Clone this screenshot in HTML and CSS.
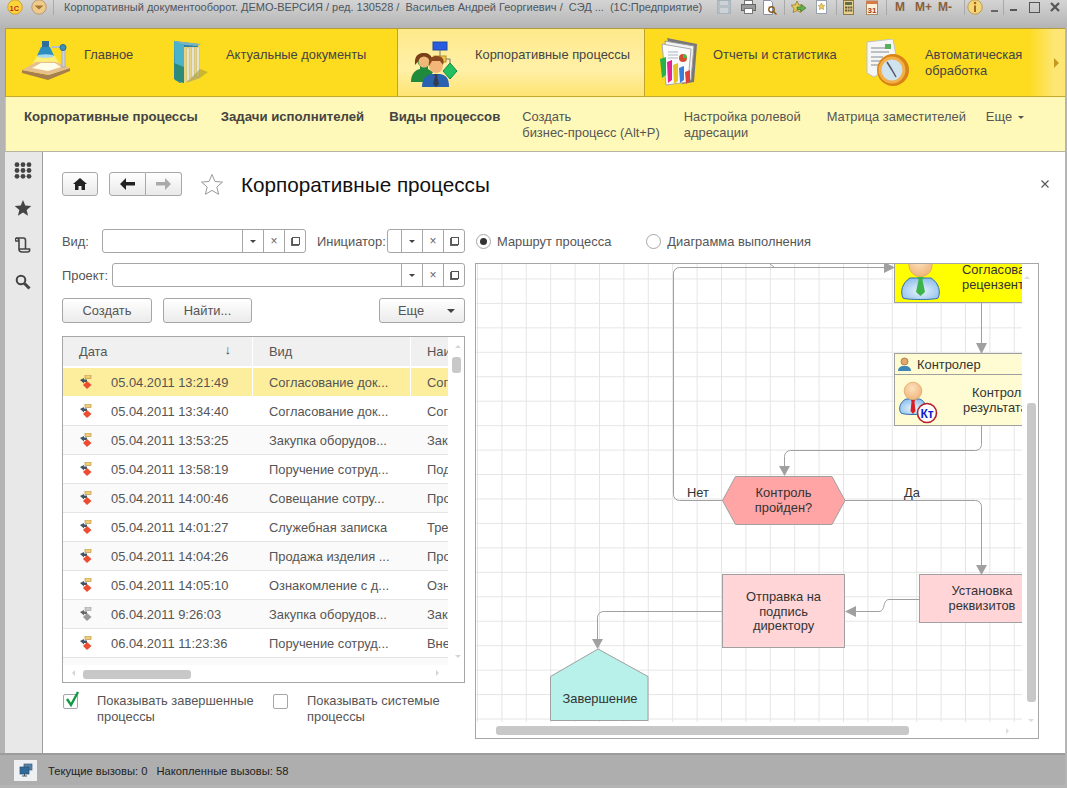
FILE: index.html
```html
<!DOCTYPE html>
<html lang="ru">
<head>
<meta charset="utf-8">
<title>Корпоративные процессы</title>
<link rel="stylesheet" href="styles.css">
</head>
<body>
<div class="window">
  <header class="titlebar">
    <svg class="tb-logo" width="16" height="16" viewBox="0 0 16 16"><circle cx="8" cy="8" r="7.200" fill="#fbd53a" stroke="#d0a030"/><text x="2.500" y="11.500" class="logo-text">1С</text></svg>
    <svg class="tb-menu" width="16" height="16" viewBox="0 0 16 16"><circle cx="8" cy="8" r="7.200" fill="#eecb8c" stroke="#b9986a"/><path d="M3.500 6.500h9L8 10.500z" fill="#a5752c"/></svg>
    <span class="tb-sep s0"></span>
    <span class="tb-title">Корпоративный документооборот. ДЕМО-ВЕРСИЯ / ред. 130528 /&nbsp; Васильев Андрей Георгиевич /&nbsp; СЭД ...&nbsp; (1С:Предприятие)</span>
    <div class="tb-tools">
      <svg width="14" height="14" viewBox="0 0 14 14"><rect x=".5" y=".5" width="13" height="13" fill="#b4bfc6" stroke="#a7b3bb"/><rect x="3" y="1" width="8" height="4" fill="#ccd2d6"/><rect x="3" y="8" width="8" height="5" fill="#ccd2d6"/></svg>
      <svg class="i-print" width="15" height="14" viewBox="0 0 15 14"><rect x="3.500" y=".5" width="8" height="4" fill="#fff" stroke="#777"/><rect x=".5" y="4.500" width="14" height="6" fill="#9a9a9a" stroke="#666"/><rect x="3.500" y="8.500" width="8" height="5" fill="#fff" stroke="#777"/></svg>
      <svg class="i-prev" width="15" height="15" viewBox="0 0 15 15"><path d="M1.500.5h7l2 2v12h-9z" fill="#fff" stroke="#8793a3"/><circle cx="9.500" cy="9.500" r="2.700" fill="none" stroke="#8a5a1c" stroke-width="1.400"/><path d="M11.500 11.500l3 3" stroke="#8a5a1c" stroke-width="1.500"/></svg>
      <span class="tb-sep s1"></span>
      <svg class="i-fav" width="15" height="15" viewBox="0 0 15 15"><path d="M6 1l1.700 3.900 4.300.4-3 3 .9 4.200L6 10.500 2.100 12.500l.9-4.200-3-3 4.300-.4z" fill="#e8c95a" stroke="#a38a3c"/><path d="M6 7h4V4.500L15 8l-5 3.800V9.500H6z" fill="#5fb04a" stroke="#3f7e34" stroke-width=".7"/></svg>
      <svg class="i-star" width="11" height="14" viewBox="0 0 11 14"><rect x=".5" y=".5" width="10" height="13" fill="#fff" stroke="#98a2ad"/><path d="M5.500 3l1 2.200 2.300.3-1.700 1.600.5 2.400-2.100-1.200-2.100 1.200.5-2.400-1.700-1.600 2.300-.3z" fill="#f2cd5c" stroke="#a98b2f" stroke-width=".6"/></svg>
      <span class="tb-sep s2"></span>
      <svg class="i-calc" width="11" height="15" viewBox="0 0 11 15"><rect x=".5" y=".5" width="10" height="14" fill="#e8d08a" stroke="#8a7a4a"/><rect x="2" y="2" width="7" height="3" fill="#5f6d4f"/><path d="M2 6.500h2v2H2zm2.600 0h2v2h-2zm2.600 0h2v2h-2zM2 9.500h2v2H2zm2.600 0h2v2h-2zm2.600 0h2v2h-2z" fill="#665d3f"/></svg>
      <svg class="i-cal" width="12" height="15" viewBox="0 0 12 15"><rect x=".5" y="1" width="11" height="13.500" fill="#fbf0d8" stroke="#a58b66"/><rect x=".5" y="1" width="11" height="3" fill="#d9794a"/><text x="1.500" y="12.500" class="cal-text">31</text></svg>
      <span class="tb-sep s3"></span>
      <span class="tb-m m1">M</span><span class="tb-m m2">M+</span><span class="tb-m m3">M-</span>
      <span class="tb-sep s4"></span>
      <svg class="i-info" width="16" height="16" viewBox="0 0 16 16"><circle cx="8" cy="8" r="7.200" fill="#f4d676" stroke="#c09a4f"/><rect x="7" y="6.500" width="2" height="6.500" fill="#a8651d"/><circle cx="8" cy="4" r="1.300" fill="#a8651d"/></svg>
      <span class="tb-drop"></span>
      <span class="tb-sep s5"></span>
      <span class="tb-min"></span>
      <span class="tb-max"></span>
      <svg class="tb-close" width="10" height="10" viewBox="0 0 10 10"><path d="M1 1l8 8M9 1L1 9" stroke="#555" stroke-width="2.200"/></svg>
    </div>
  </header>

  <nav class="sections">
    <a class="section s-main">
      <svg class="sec-icon" width="48" height="39" viewBox="0 0 48 39"><path d="M15 15h18l7 12-18 3-14-3z" fill="#fdf08a" opacity=".85"/><path d="M0 29v3l26 7 22-9v-3L26 34z" fill="#a57f4e"/><path d="M0 29l14-8h20l14 6-21 7z" fill="#e6c08c"/><path d="M10 27l9-5h14l6 4-13 4z" fill="#fffce8"/><rect x="40" y="7" width="3" height="19" fill="#ced3d6" stroke="#8c9298" stroke-width=".5"/><path d="M30 6h10" stroke="#b9c0c4" stroke-width="2"/><path d="M15 15l4-9h9l4 9z" fill="#2a8fc0"/><rect x="20" y="0" width="7" height="6" fill="#2f6f96"/><ellipse cx="23.500" cy="15" rx="8.500" ry="1.800" fill="#a7d9ef"/><circle cx="41" cy="6.500" r="3" fill="#3f8fbb" stroke="#25688e"/></svg>
      <span class="sec-text w-main">Главное</span>
    </a>
    <a class="section s-docs">
      <svg class="sec-icon" width="40" height="46" viewBox="0 0 40 46"><path d="M2 2l24 3v30l-18 9-6-4z" fill="#2f7fa3"/><path d="M3 2l26 3-4 2L3 5z" fill="#79b4c4"/><path d="M12 8h15v32l-15 4z" fill="#e8d47a"/><path d="M15 9h2v33h-2zm5-1h2v31h-2zm5 0h2v30h-2z" fill="#f7f6ee" stroke="#9a9a8a" stroke-width=".4"/><path d="M28 30l8 3-8 6-14 5z" fill="#a79b3a" opacity=".6"/><path d="M2 2l10 4v38l-9-3z" fill="#4cb2c9"/><path d="M2 24l10 4v16l-9-3z" fill="#2d8a78"/></svg>
      <span class="sec-text w-docs">Актуальные документы</span>
    </a>
    <a class="section s-proc">
      <svg class="sec-icon" width="48" height="46" viewBox="0 0 48 46"><rect x="23" y="1" width="14" height="8" fill="#2a5ce0" stroke="#2247a8"/><path d="M30 9v6" stroke="#777"/><rect x="24" y="15" width="12" height="6" fill="#f1c64a" stroke="#b48f22"/><path d="M30 21v4M36 18h4v4" stroke="#777" fill="none"/><path d="M40 22l7 8-7 8-7-8z" fill="#22c060" stroke="#138a42"/><path d="M1 41c0-8 4-12 9-13v-3c-4-3-4-13 4-13s8 10 4 13v3l5 3-6 10z" fill="#1f8a3c"/><path d="M5 24c-1-10 4-12 9-12s10 3 8 12l-3-6-8-1z" fill="#7a3f18"/><circle cx="14" cy="21" r="5.500" fill="#f0b878"/><path d="M12 46c0-9 4-12 10-13h8c6 1 9 4 9 13z" fill="#2a62b0"/><circle cx="26" cy="25" r="7" fill="#f3b678"/><path d="M19 25c-1-8 3-10 8-10s8 3 6 9l-3-4h-8z" fill="#8b4a1e"/><path d="M24 33h4l-1 2 2 8-3 3-3-3 2-8z" fill="#363c50"/></svg>
      <span class="sec-text w-proc">Корпоративные процессы</span>
    </a>
    <a class="section s-rep">
      <svg class="sec-icon" width="40" height="50" viewBox="0 0 40 50"><path d="M8 1l30 6-3 38-12 2z" fill="#777"/><path d="M6 4l29 5-3 34-24 3z" fill="#f2f2f2" stroke="#999"/><path d="M3 7l29 5-3 33-22 3z" fill="#fbfbfb" stroke="#aaa"/><circle cx="24" cy="21" r="4" fill="#d14f2e"/><path d="M24 21v-4a4 4 0 0 1 4 4z" fill="#4bb94a"/><path d="M9 15h10M9 18h10M9 21h10" stroke="#a9b3c6"/><path d="M1 22l6-2v18l-4 3z" fill="#27b14a"/><path d="M8 25l5-2v20l-4 3z" fill="#e02690"/><path d="M14 28l5-2v18l-4 3z" fill="#e8c225"/><path d="M20 31l5-2v14l-4 3z" fill="#3a7ed8"/><path d="M26 35l5-2v11l-4 3z" fill="#e0413a"/></svg>
      <span class="sec-text w-rep">Отчеты и статистика</span>
    </a>
    <a class="section s-auto">
      <svg class="sec-icon" width="44" height="48" viewBox="0 0 44 48"><path d="M1 3l26-3 4 22L8 38 1 34z" fill="#f6f6f6" stroke="#bcc4c6"/><path d="M5 9h14M5 13h18M5 18h12M5 22h12M5 26h10" stroke="#7f8d92"/><rect x="19" y="5" width="6" height="5" fill="#58b158"/><circle cx="27" cy="31" r="16" fill="#d88314"/><circle cx="26" cy="31" r="13.500" fill="#f3b04a"/><circle cx="26" cy="31" r="10.500" fill="#cfe3ee"/><path d="M26 31l-5-8M26 31l4 7" stroke="#556" stroke-width="1.500"/></svg>
      <span class="sec-text w-auto">Автоматическая<br>обработка</span>
    </a>
    <span class="sec-more"></span>
  </nav>

  <nav class="commands">
    <a class="cmd b c1">Корпоративные процессы</a>
    <a class="cmd b c2">Задачи исполнителей</a>
    <a class="cmd b c3">Виды процессов</a>
    <a class="cmd c4">Создать<br>бизнес-процесс (Alt+P)</a>
    <a class="cmd c5">Настройка ролевой<br>адресации</a>
    <a class="cmd c6">Матрица заместителей</a>
    <a class="cmd c7">Еще <span class="cmd-drop"></span></a>
  </nav>

  <div class="workspace">
    <aside class="sidebar">
      <svg width="18" height="17" viewBox="0 0 18 17" fill="#444"><circle cx="3" cy="2.700" r="2.400"/><circle cx="9" cy="2.700" r="2.400"/><circle cx="15" cy="2.700" r="2.400"/><circle cx="3" cy="8.500" r="2.400"/><circle cx="9" cy="8.500" r="2.400"/><circle cx="15" cy="8.500" r="2.400"/><circle cx="3" cy="14.300" r="2.400"/><circle cx="9" cy="14.300" r="2.400"/><circle cx="15" cy="14.300" r="2.400"/></svg>
      <svg width="18" height="16" viewBox="0 0 18 17"><path d="M9 0l2.400 5.900 6.400.5-4.900 4.100 1.500 6.200L9 13.400 3.600 16.700l1.500-6.200L.2 6.400l6.400-.5z" fill="#444"/></svg>
      <svg width="16" height="16" viewBox="0 0 16 16"><path d="M1 1h7.500c1.500 0 2 1 2 2.500V12h-6.500V3.500C4 2 3 1 1 1zM1 1C0 2 0 4 1.500 4H4M4 12c0 2 1 3 3 3h5.500c1.500 0 2.500-1 2-3h-4" fill="none" stroke="#444" stroke-width="1.600"/></svg>
      <svg width="16" height="16" viewBox="0 0 16 16"><circle cx="6" cy="6" r="4.300" fill="none" stroke="#444" stroke-width="2"/><path d="M9.500 9.500l5 5" stroke="#444" stroke-width="3"/></svg>
    </aside>

    <main class="form">
      <div class="form-head">
        <button class="btn-icon home"><svg width="14" height="12" viewBox="0 0 14 12"><path d="M7 0l7 6h-2v6H8.500V8h-3v4H2V6H0z" fill="#222"/></svg></button>
        <div class="btn-pair">
          <button class="btn-icon half"><svg width="15" height="12" viewBox="0 0 15 12"><path d="M6 0v4h9v3.500H6V12L0 6z" fill="#222"/></svg></button>
          <button class="btn-icon half"><svg width="15" height="12" viewBox="0 0 15 12"><path d="M9 0v4H0v3.500h9V12l6-6z" fill="#aaa"/></svg></button>
        </div>
        <svg class="fav" width="24" height="22" viewBox="0 0 24 22"><path d="M12 1.500l3 7 7.500.6-5.700 4.900 1.800 7.300L12 17.400l-6.600 3.900 1.800-7.300L1.500 9.100 9 8.500z" fill="#fff" stroke="#999"/></svg>
        <h1 class="form-title">Корпоративные процессы</h1>
        <svg class="form-close" width="8" height="8" viewBox="0 0 8 8"><path d="M.5.5l7 7M7.500.5l-7 7" stroke="#555" stroke-width="1.100"/></svg>
      </div>

      <div class="form-body">
        <section class="left">
          <div class="field-row r1">
            <label class="lbl vid">Вид:</label>
            <div class="field f-vid"><span class="fld-input"></span><span class="fb"><i class="tri"></i></span><span class="fb x">×</span><span class="fb"><i class="copy"></i></span></div>
            <label class="lbl ini">Инициатор:</label>
            <div class="field f-ini"><span class="fld-input"></span><span class="fb"><i class="tri"></i></span><span class="fb x">×</span><span class="fb"><i class="copy"></i></span></div>
          </div>
          <div class="field-row r2">
            <label class="lbl prj">Проект:</label>
            <div class="field f-prj"><span class="fld-input"></span><span class="fb"><i class="tri"></i></span><span class="fb x">×</span><span class="fb"><i class="copy"></i></span></div>
          </div>
          <div class="actions">
            <button class="btn b-new">Создать</button>
            <button class="btn b-find">Найти...</button>
            <button class="btn b-more">Еще <i class="tri big"></i></button>
          </div>

          <div class="table">
            <div class="t-view">
              <div class="t-row t-head"><div class="c-date">Дата<span class="sort">↓</span></div><div class="c-kind">Вид</div><div class="c-name">Наи</div></div>
              <div class="t-row sel"><div class="c-date"><svg class="ri"><use href="#rowicon"/></svg>05.04.2011 13:21:49</div><div class="c-kind">Согласование док...</div><div class="c-name">Сог</div></div>
              <div class="t-row"><div class="c-date"><svg class="ri"><use href="#rowicon"/></svg>05.04.2011 13:34:40</div><div class="c-kind">Согласование док...</div><div class="c-name">Сог</div></div>
              <div class="t-row alt"><div class="c-date"><svg class="ri"><use href="#rowicon"/></svg>05.04.2011 13:53:25</div><div class="c-kind">Закупка оборудов...</div><div class="c-name">Зак</div></div>
              <div class="t-row"><div class="c-date"><svg class="ri"><use href="#rowicon"/></svg>05.04.2011 13:58:19</div><div class="c-kind">Поручение сотруд...</div><div class="c-name">Под</div></div>
              <div class="t-row alt"><div class="c-date"><svg class="ri"><use href="#rowicon"/></svg>05.04.2011 14:00:46</div><div class="c-kind">Совещание сотру...</div><div class="c-name">Про</div></div>
              <div class="t-row"><div class="c-date"><svg class="ri"><use href="#rowicon"/></svg>05.04.2011 14:01:27</div><div class="c-kind">Служебная записка</div><div class="c-name">Тре</div></div>
              <div class="t-row alt"><div class="c-date"><svg class="ri"><use href="#rowicon"/></svg>05.04.2011 14:04:26</div><div class="c-kind">Продажа изделия ...</div><div class="c-name">Про</div></div>
              <div class="t-row"><div class="c-date"><svg class="ri"><use href="#rowicon"/></svg>05.04.2011 14:05:10</div><div class="c-kind">Ознакомление с д...</div><div class="c-name">Озн</div></div>
              <div class="t-row alt"><div class="c-date"><svg class="ri"><use href="#rowicongrey"/></svg>06.04.2011 9:26:03</div><div class="c-kind">Закупка оборудов...</div><div class="c-name">Зак</div></div>
              <div class="t-row"><div class="c-date"><svg class="ri"><use href="#rowicon"/></svg>06.04.2011 11:23:36</div><div class="c-kind">Поручение сотруд...</div><div class="c-name">Вне</div></div>
              <div class="t-row alt"><div class="c-date"><svg class="ri"><use href="#rowicon"/></svg></div><div class="c-kind"></div><div class="c-name"></div></div>
            </div>
            <span class="sb-v-up"></span><span class="sb-v-thumb"></span><span class="sb-v-down"></span>
            <span class="sb-h-left"></span><span class="sb-h-thumb"></span><span class="sb-h-right"></span>
          </div>

          <div class="checks">
            <div class="check c-a">
              <span class="box"><svg width="20" height="20" viewBox="0 0 20 20"><path d="M4 8l4 6L15 1" fill="none" stroke="#129a42" stroke-width="2.400"/></svg></span>
              <span class="check-text">Показывать завершенные процессы</span>
            </div>
            <div class="check c-b">
              <span class="box"></span>
              <span class="check-text">Показывать системые процессы</span>
            </div>
          </div>
        </section>

        <section class="right">
          <div class="radios">
            <span class="radio on r-a"><i></i>Маршрут процесса</span>
            <span class="radio r-b"><i></i>Диаграмма выполнения</span>
          </div>
          <div class="canvas">
            <svg class="diagram" width="546" height="458" viewBox="476 264 546 458">
              <defs>
                <pattern id="grid" x="477" y="254" width="24.400" height="24.450" patternUnits="userSpaceOnUse"><path d="M.5 0V24.450M0 .5H24.400" fill="none" stroke="#e5e5e5"/></pattern>
                <radialGradient id="shirt" cx=".5" cy=".6" r=".6"><stop offset="0" stop-color="#eaf5fd"/><stop offset="1" stop-color="#8fc0ec"/></radialGradient>
                <radialGradient id="head" cx=".45" cy=".35" r=".7"><stop offset="0" stop-color="#fde2bd"/><stop offset="1" stop-color="#eeb277"/></radialGradient>
              </defs>
              <rect x="476" y="264" width="546" height="458" fill="#fff"/>
              <rect x="476" y="264" width="546" height="458" fill="url(#grid)"/>

              <g class="link">
                <path d="M722.500 500.500H679.500a6 6 0 0 1-6-6V273.500a6 6 0 0 1 6-6H884"/>
                <path d="M981.500 303V343"/>
                <path d="M981.500 426V444.500a6 6 0 0 1-6 6H790.500a6 6 0 0 0-6 6V466"/>
                <path d="M845 500.500H975.500a6 6 0 0 1 6 6V565"/>
                <path d="M919.500 599.500H889c-7 0-3 12-10 12H856"/>
                <path d="M722.500 611.500H603.500a6 6 0 0 0-6 6V639"/>
                <path d="M770 264l4 3"/>
              </g>
              <g class="arrow">
                <path d="M884 262l11 5.500-11 5.500z"/>
                <path d="M976 343h11l-5.500 11z"/>
                <path d="M779 466h11l-5.500 10z"/>
                <path d="M976 565h11l-5.500 10z"/>
                <path d="M845 611.500l11-5.500v11z"/>
                <path d="M592 639h11l-5.500 10z"/>
              </g>

              <rect class="n-yellow" x="894.500" y="250" width="150" height="52.500"/>
              <path d="M903 298c-3-6-1-15 7-20h21c8 5 10 14 7 20-3 2-32 2-35 0z" fill="url(#shirt)" stroke="#2f6db1"/>
              <circle cx="920.500" cy="265" r="11.700" fill="url(#head)" stroke="#dba263" stroke-width=".7"/>
              <path d="M917.500 277h6l-1 3 2.500 12-4.500 4-4.500-4 2.500-12z" fill="#3cb44a"/>
              <text class="t" x="962" y="274">Согласование</text>
              <text class="t" x="962" y="289">рецензентом</text>

              <rect class="n-cream" x="894.500" y="353.500" width="150" height="72"/>
              <path d="M894.500 374.500H1022" stroke="#a0a0a0"/>
              <circle cx="904.500" cy="361.500" r="3.500" fill="#e6a76a" stroke="#7a5a34" stroke-width=".6"/>
              <path d="M898 371c0-3 2-5 6.500-5s6.500 2 6.500 5z" fill="#3c86b8"/>
              <text class="t" x="917" y="369">Контролер</text>
              <path d="M901 413c-3-4-1-11 5-14h14c6 3 8 10 5 14-3 2-21 2-24 0z" fill="url(#shirt)" stroke="#2f6db1"/>
              <circle cx="913" cy="391" r="8.800" fill="url(#head)" stroke="#dba263" stroke-width=".7"/>
              <path d="M911 400h4l-.5 2 1 9-2.500 3-2.500-3 1-9z" fill="#d81e25"/>
              <circle cx="927" cy="413" r="9.500" fill="#fff" stroke="#b51e2a" stroke-width="1.600"/>
              <text class="kt" x="920.500" y="417.500">Кт</text>
              <text class="t" x="972" y="397">Контроль</text>
              <text class="t" x="963" y="412">результата</text>

              <path class="n-hex" d="M735.500 476.500h96.500l13 24-13 24h-96.500l-13-24z"/>
              <text class="t m" x="783.500" y="497">Контроль</text>
              <text class="t m" x="783.500" y="512">пройден?</text>
              <text class="t" x="687" y="497">Нет</text>
              <text class="t" x="904" y="497">Да</text>

              <rect class="n-pink" x="919.500" y="574.500" width="150" height="48"/>
              <text class="t m" x="982" y="595">Установка</text>
              <text class="t m" x="982" y="610">реквизитов</text>

              <rect class="n-pink" x="722.500" y="574.500" width="122" height="73"/>
              <text class="t m" x="783.500" y="601">Отправка на</text>
              <text class="t m" x="783.500" y="616">подпись</text>
              <text class="t m" x="783.500" y="630">директору</text>

              <path class="n-end" d="M550.500 720.500V676.500L598 649l50 27.500v44z"/>
              <text class="t m" x="600" y="703">Завершение</text>
            </svg>
            <span class="cv-up"></span><span class="cv-thumb"></span><span class="cv-down"></span>
            <span class="ch-thumb"></span><span class="ch-right"></span>
          </div>
        </section>
      </div>
    </main>
  </div>

  <footer class="statusbar">
    <span class="st-icon"><svg width="14" height="14" viewBox="0 0 14 14"><rect x="5" y="1" width="8" height="6" fill="#5a82a8" stroke="#3b5f82" stroke-width=".7"/><rect x="1" y="4" width="9" height="7" fill="#2f6a99" stroke="#294f70" stroke-width=".7"/><path d="M3 13h5M5.500 11v2" stroke="#456"/></svg></span>
    <span class="st-text">Текущие вызовы: 0</span>
    <span class="st-text">Накопленные вызовы: 58</span>
  </footer>
</div>

<svg class="defs" width="0" height="0">
  <defs>
    <symbol id="rowicon" viewBox="0 0 14 14"><path d="M1 5l4-2v1.500h3V7H5v1.500z" fill="#3e5566"/><rect x="6" y="0" width="6" height="3.500" fill="#f1cd78" stroke="#b08a3a" stroke-width=".6"/><path d="M8 6l4.500 4L8 14l-4-4z" fill="#ec4c2f"/></symbol>
    <symbol id="rowicongrey" viewBox="0 0 14 14"><path d="M1 5l4-2v1.500h3V7H5v1.500z" fill="#666"/><rect x="6" y="0" width="6" height="3.500" fill="#ccc" stroke="#999" stroke-width=".6"/><path d="M8 6l4.500 4L8 14l-4-4z" fill="#999"/></symbol>
  </defs>
</svg>
</body>
</html>
```
FILE: styles.css
```css
* { box-sizing: border-box; }
html, body { margin: 0; padding: 0; height: 100%; }
body { font-family: "Liberation Sans", Arial, sans-serif; font-size: 12.9px; color: #444; overflow: hidden; background: #fff; }
i { font-style: normal; }
button { font-family: inherit; }
.defs { position: absolute; }

.window { width: 1067px; height: 788px; display: flex; flex-direction: column; background: #b4b4b4; padding: 0 0 3px 5px; }

.titlebar { height: 28px; margin: 0 0 0 -5px; padding: 0 0 14px 7px; display: flex; align-items: center; flex: none; background: linear-gradient(#d4d4d4, #b4b4b4); }
.tb-logo { flex: none; }
.logo-text { font: bold 7.500px "Liberation Sans", sans-serif; fill: #c62a22; }
.cal-text { font: bold 8px "Liberation Sans", sans-serif; fill: #a5421f; }
.tb-menu { flex: none; margin-left: 8px; }
.tb-sep { width: 1px; height: 16px; background: #a9a9a9; flex: none; }
.s0 { margin-left: 6px; }
.s1 { margin-left: 7px; }
.s2 { margin-left: 9px; }
.s3 { margin-left: 8px; }
.s4 { margin-left: 12px; }
.s5 { margin-left: 5px; }
.tb-title { font-size: 11px; color: #4e5660; white-space: nowrap; width: 653px; margin-left: 10px; flex: none; }
.tb-tools { display: flex; align-items: center; }
.tb-tools svg { flex: none; }
.i-print { margin-left: 10px; }
.i-prev { margin-left: 6px; }
.i-fav { margin-left: 6px; }
.i-star { margin-left: 10px; }
.i-calc { margin-left: 6px; }
.i-cal { margin-left: 12px; }
.tb-m { font-size: 12px; font-weight: bold; color: #8a5f3a; }
.m1 { margin-left: 8px; }
.m2 { margin-left: 10px; }
.m3 { margin-left: 6px; }
.i-info { margin-left: 2px; }
.tb-drop { width: 7px; height: 2px; background: #666; margin: 8px 0 0 8px; }
.tb-min { width: 7px; height: 2px; background: #555; margin: 6px 0 0 6px; }
.tb-max { width: 11px; height: 11px; border: 1px solid #555; margin-left: 12px; }
.tb-close { margin-left: 10px; }

.sections { height: 69px; flex: none; margin-right: 2px; display: flex; background: linear-gradient(90deg, #fddb1e 96.500%, #fde673 99%); border-top: 1px solid #b39a3d; border-left: 1px solid #b39a3d; border-bottom: 1px solid #c8a930; position: relative; }
.section { display: flex; align-items: flex-start; height: 100%; flex: none; color: #444; }
.sec-text { line-height: 16px; padding-top: 18px; white-space: nowrap; }
.sec-icon { flex: none; margin-top: 10px; }
.s-main { width: 142px; padding-left: 16px; }
.w-main { margin-left: 14px; }
.s-main .sec-icon { margin-top: 12px; }
.s-docs { width: 249px; padding-left: 24px; }
.w-docs { margin-left: 14px; }
.s-proc { width: 248px; padding-left: 15px; background: linear-gradient(#feea8a, #fff0a8 60%, #fee472); border-left: 1px solid #bfa32f; border-right: 1px solid #bfa32f; }
.s-proc .sec-icon { margin-left: -3px; margin-top: 12px; }
.w-proc { margin-left: 17px; }
.s-rep { width: 212px; padding-left: 14px; }
.s-rep .sec-icon { margin-top: 8px; }
.w-rep { margin-left: 14px; }
.s-auto { width: 188px; padding-left: 9px; }
.w-auto { margin-left: 15px; }
.sec-more { position: absolute; right: 6px; top: 29px; border-left: 5px solid #c49a1e; border-top: 5px solid transparent; border-bottom: 5px solid transparent; }

.commands { height: 55px; flex: none; margin-right: 2px; display: flex; background: #fef9b8; border-bottom: 1px solid #b4b4a0; border-left: 1px solid #c8c8b0; }
.cmd { line-height: 16px; padding-top: 12px; white-space: nowrap; color: #555; }
.cmd.b { font-weight: bold; font-size: 13.2px; color: #444; }
.c1 { margin-left: 18px; }
.c2 { margin-left: 23px; }
.c3 { margin-left: 25px; }
.c4 { margin-left: 22px; }
.c5 { margin-left: 24px; }
.c6 { margin-left: 26px; }
.c7 { margin-left: 20px; }
.cmd-drop { display: inline-block; vertical-align: 2px; margin-left: 2px; border-top: 3px solid #555; border-left: 3px solid transparent; border-right: 3px solid transparent; }

.workspace { flex: 1; display: flex; min-height: 0; margin-right: 2px; }
.sidebar { width: 38px; flex: none; background: #e8e8e8; border-right: 1px solid #9f9f9f; display: flex; flex-direction: column; align-items: center; padding: 10px 1px 0 0; gap: 21px; }

.form { flex: 1; background: #fff; min-width: 0; padding: 19px 0 0 19px; display: flex; flex-direction: column; }
.form-head { display: flex; align-items: center; height: 25px; position: relative; flex: none; }
.btn-icon { height: 24px; width: 36px; border: 1px solid #a8a8a8; border-radius: 3px; background: linear-gradient(#fff, #e9e9e9); padding: 0; display: flex; align-items: center; justify-content: center; }
.home { margin-right: 11px; }
.btn-pair { display: flex; }
.half { width: 37px; border-radius: 3px 0 0 3px; }
.half + .half { border-left: 0; border-radius: 0 3px 3px 0; width: 36px; }
.fav { margin-left: 18px; }
.form-title { font-size: 20.700px; font-weight: normal; color: #111; margin: 2px 0 0 17px; line-height: 24px; }
.form-close { position: absolute; right: 16px; top: 9px; }

.form-body { display: flex; flex: 1; min-height: 0; margin-top: 33px; }
.left { width: 403px; flex: none; }
.field-row { display: flex; align-items: center; height: 24px; }
.r2 { margin-top: 10px; }
.lbl { color: #555; white-space: nowrap; }
.vid { width: 40px; }
.prj { width: 50px; }
.ini { width: 70px; margin-left: 11px; }
.field { height: 24px; border: 1px solid #a6a6a6; border-radius: 3px; display: flex; background: #fff; }
.f-vid { width: 204px; }
.f-ini { width: 78px; }
.f-prj { width: 353px; }
.fld-input { flex: 1; }
.fb { width: 21px; flex: none; border-left: 1px solid #a6a6a6; display: flex; align-items: center; justify-content: center; color: #666; font-size: 12px; }
.tri { display: block; border-top: 3px solid #444; border-left: 3px solid transparent; border-right: 3px solid transparent; }
.copy { display: block; width: 9px; height: 9px; position: relative; }
.copy::before { content: ""; position: absolute; left: 0; bottom: 0; width: 6px; height: 6px; border: 1px solid #666; }
.copy::after { content: ""; position: absolute; right: 0; top: 0; width: 6px; height: 6px; border: 1px solid #555; background: #fff; }

.actions { display: flex; margin-top: 11px; height: 25px; }
.btn { height: 25px; border: 1px solid #a6a6a6; border-radius: 3px; background: linear-gradient(#fff, #ebebeb); color: #555; font-size: 12.9px; padding: 0; }
.b-new { width: 90px; }
.b-find { width: 89px; margin-left: 11px; }
.b-more { width: 86px; margin-left: auto; display: flex; align-items: center; padding-left: 18px; }
.tri.big { border-top-width: 4px; border-left-width: 4px; border-right-width: 4px; margin-left: 23px; }

.table { margin-top: 13px; height: 347px; border: 1px solid #a6a6a6; position: relative; background: #fff; }
.t-view { width: 385px; height: 328px; overflow: hidden; }
.t-row { display: grid; grid-template-columns: 189px 158px 38px; height: 29px; border-bottom: 1px solid #e4e4e4; align-items: center; color: #555; }
.t-row > div { height: 100%; display: flex; align-items: center; white-space: nowrap; overflow: hidden; }
.t-row > div + div { border-left: 1px solid transparent; }
.c-date { padding-left: 16px; position: relative; }
.c-kind, .c-name { padding-left: 16px; }
.t-row.alt { background: #fafafa; }
.t-head { height: 31px; background: #f0f0f0; border-bottom: 2px solid #fff; }
.t-head > div + div, .sel > div + div { border-left-color: #fff; }
.sel { background: #fdee9e; border-bottom-color: #fff; }
.sort { position: absolute; right: 21px; top: 5px; color: #444; font-size: 13px; }
.ri { width: 14px; height: 14px; margin-right: 18px; flex: none; }
.sb-v-up { position: absolute; left: 392px; top: 8px; border-bottom: 3px solid #d5d5d5; border-left: 3px solid transparent; border-right: 3px solid transparent; }
.sb-v-thumb { position: absolute; left: 389px; top: 20px; width: 9px; height: 16px; background: #c8c8c8; border-radius: 3px; }
.sb-v-down { position: absolute; left: 392px; top: 318px; border-top: 3px solid #d5d5d5; border-left: 3px solid transparent; border-right: 3px solid transparent; }
.sb-h-left { position: absolute; left: 9px; top: 333px; border-right: 3px solid #d5d5d5; border-top: 3px solid transparent; border-bottom: 3px solid transparent; }
.sb-h-thumb { position: absolute; left: 20px; top: 333px; width: 108px; height: 9px; background: #c8c8c8; border-radius: 3px; }
.sb-h-right { position: absolute; left: 373px; top: 333px; border-left: 3px solid #d5d5d5; border-top: 3px solid transparent; border-bottom: 3px solid transparent; }

.checks { display: flex; margin-top: 9px; }
.check { display: flex; align-items: flex-start; line-height: 16px; color: #555; flex: none; }
.c-a { width: 210px; }
.box { width: 15px; height: 15px; border: 1px solid #a6a6a6; border-radius: 2px; margin: 2px 19px 0 1px; flex: none; background: #fff; position: relative; }
.box svg { position: absolute; left: -1px; top: -4px; }
.check-text { width: 170px; padding-top: 1px; }
.c-b .check-text { width: 140px; }

.right { width: 563px; flex: none; margin-left: 10px; }
.radios { height: 24px; display: flex; align-items: center; color: #555; }
.radio { display: flex; align-items: center; white-space: nowrap; }
.radio i { width: 15px; height: 15px; border: 1px solid #a6a6a6; border-radius: 50%; margin-right: 6px; background: #fff; position: relative; }
.radio.on i::after { content: ""; position: absolute; left: 3px; top: 3px; width: 7px; height: 7px; border-radius: 50%; background: #333; }
.r-a { margin-left: 1px; }
.r-b { margin-left: 35px; }
.canvas { width: 564px; height: 476px; margin-top: 10px; border: 1px solid #a6a6a6; position: relative; background: #fff; overflow: hidden; }
.diagram { display: block; }
.link path { fill: none; stroke: #a0a0a0; }
.arrow path { fill: #a0a0a0; }
.n-yellow { fill: #ffff00; stroke: #a0a0a0; }
.n-cream { fill: #fffbd2; stroke: #a0a0a0; }
.n-hex { fill: #ffa5a5; stroke: #a0a0a0; }
.n-pink { fill: #ffd5d7; stroke: #a0a0a0; }
.n-end { fill: #b8f0ea; stroke: #a0a0a0; }
.t { font: 12.9px "Liberation Sans", sans-serif; fill: #333; }
.t.m { text-anchor: middle; }
.kt { font: bold 12px "Liberation Sans", sans-serif; fill: #0a1fd0; }
.cv-up { position: absolute; left: 548px; top: 12px; border-bottom: 3px solid #ddd; border-left: 3px solid transparent; border-right: 3px solid transparent; }
.cv-thumb { position: absolute; left: 551px; top: 139px; width: 9px; height: 299px; background: #c8c8c8; border-radius: 3px; }
.cv-down { position: absolute; left: 552px; top: 455px; border-top: 3px solid #ddd; border-left: 3px solid transparent; border-right: 3px solid transparent; }
.ch-thumb { position: absolute; left: 20px; top: 462px; width: 413px; height: 9px; background: #c8c8c8; border-radius: 3px; }
.ch-right { position: absolute; left: 530px; top: 464px; border-left: 3px solid #ddd; border-top: 3px solid transparent; border-bottom: 3px solid transparent; }

.statusbar { height: 32px; flex: none; margin: 0 2px 0 -5px; background: #aeaeae; border-top: 2px solid #9c9c9c; display: flex; align-items: center; padding-left: 14px; font-size: 11.200px; color: #222; }
.st-icon { width: 23px; height: 21px; background: #eef0f2; display: flex; align-items: center; justify-content: center; margin-right: 11px; }
.st-text { margin-right: 9px; padding-top: 1px; }
```
